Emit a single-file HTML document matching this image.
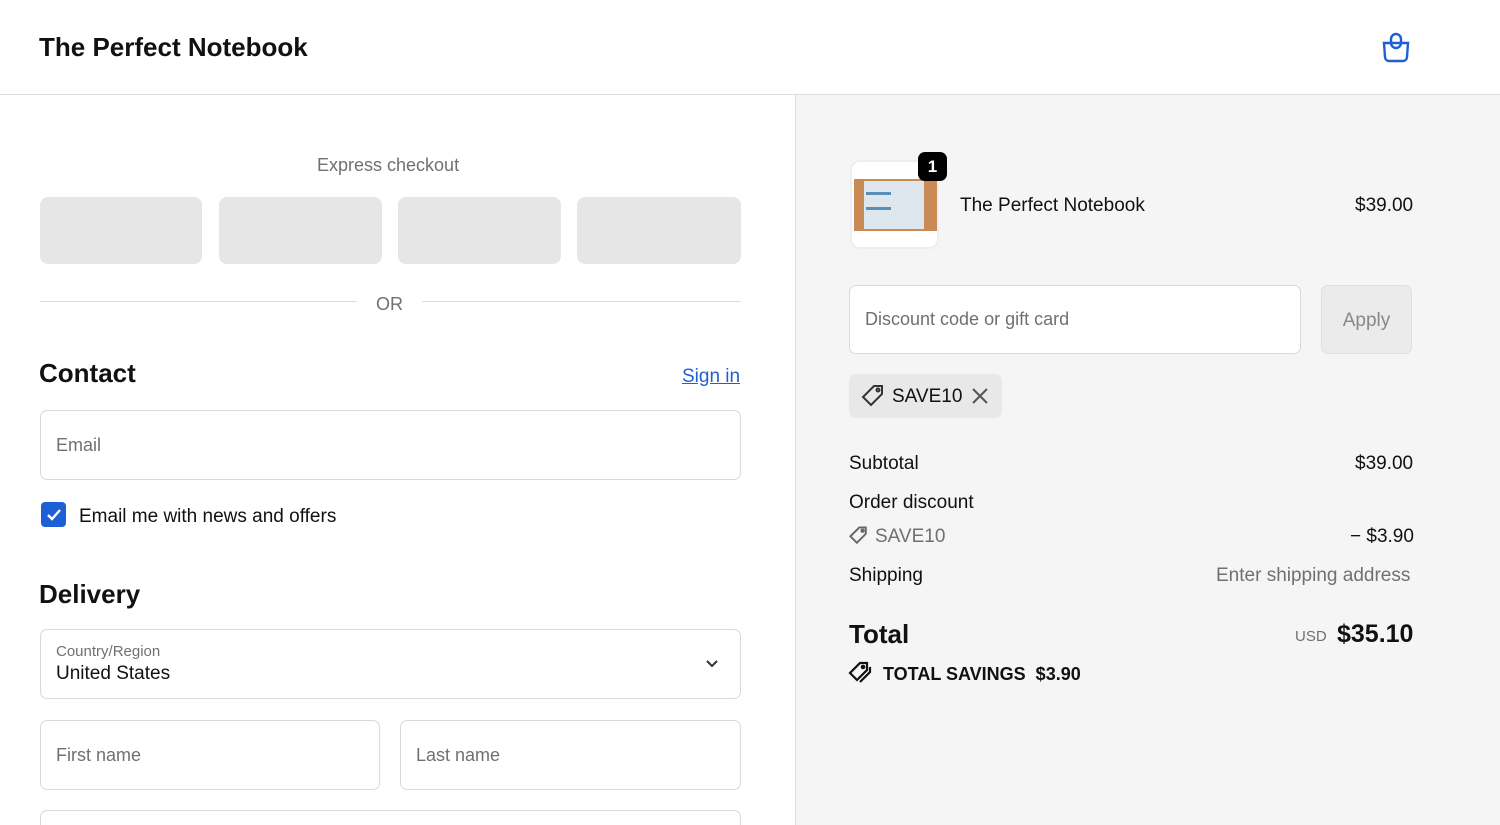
<!DOCTYPE html>
<html style="overflow:hidden;width:1500px;height:825px"><head><meta charset="utf-8"><style>
*{box-sizing:border-box;margin:0;padding:0}
body{width:1500px;height:825px;overflow:hidden;font-family:"Liberation Sans",sans-serif;color:#000;background:#fff;position:relative}
.abs{position:absolute}
.hdr{left:0;top:0;width:1500px;height:95px;border-bottom:1px solid #ddd;background:#fff}
.right{left:795px;top:95px;width:705px;height:730px;background:#f5f5f5;border-left:1px solid #ddd}
.inp{position:absolute;border:1px solid #d9d9d9;border-radius:7px;background:#fff;font-size:18px;color:#707070;padding-left:15px;display:flex;align-items:center}
.exp{position:absolute;top:197px;height:67px;background:#e6e6e6;border-radius:8px}
.t{position:absolute;white-space:nowrap}
</style></head><body>
<div class="abs hdr"></div>
<div class="t" style="left:39px;top:32px;font-size:26px;font-weight:bold;color:#111">The Perfect Notebook</div>
<svg class="abs" style="left:1381px;top:31px" width="30" height="32" viewBox="0 0 30 32" fill="none" stroke="#1f5fd6" stroke-width="2.4"><path d="M3 12h24l-1 14a4 4 0 0 1-4 4H8a4 4 0 0 1-4-4z"/><rect x="10" y="3" width="10" height="14" rx="5"/></svg>
<div class="abs right"></div>

<div class="t" style="left:317px;top:155px;font-size:18px;color:#707070">Express checkout</div>
<div class="exp" style="left:40px;width:162px"></div>
<div class="exp" style="left:219px;width:163px"></div>
<div class="exp" style="left:398px;width:163px"></div>
<div class="exp" style="left:577px;width:164px"></div>
<div class="abs" style="left:40px;top:301px;width:317px;border-top:1px solid #ddd"></div>
<div class="abs" style="left:422px;top:301px;width:319px;border-top:1px solid #ddd"></div>
<div class="t" style="left:376px;top:294px;font-size:18px;color:#707070">OR</div>
<div class="t" style="left:39px;top:358px;font-size:26px;font-weight:bold;color:#111">Contact</div>
<div class="t" style="left:682px;top:366px;font-size:19px;color:#1f5fd6;text-decoration:underline">Sign in</div>
<div class="inp" style="left:40px;top:410px;width:701px;height:70px">Email</div>
<div class="abs" style="left:41px;top:502px;width:25px;height:25px;background:#1f5fd6;border-radius:4px"></div>
<svg class="abs" style="left:41px;top:502px" width="25" height="25"><path d="M7 13l4 4 8-9" stroke="#fff" stroke-width="2.4" fill="none"/></svg>
<div class="t" style="left:79px;top:506px;font-size:19px;color:#111">Email me with news and offers</div>
<div class="t" style="left:39px;top:579px;font-size:26px;font-weight:bold;color:#111">Delivery</div>
<div class="inp" style="left:40px;top:629px;width:701px;height:70px;display:block;padding-top:13px"><div style="font-size:15px;color:#707070">Country/Region</div><div style="font-size:19px;color:#111;margin-top:3px">United States</div></div>
<svg class="abs" style="left:704px;top:658px" width="16" height="12"><path d="M3 3l5 5 5-5" stroke="#333" stroke-width="2" fill="none"/></svg>
<div class="inp" style="left:40px;top:720px;width:340px;height:70px">First name</div>
<div class="inp" style="left:400px;top:720px;width:341px;height:70px">Last name</div>
<div class="inp" style="left:40px;top:810px;width:701px;height:15px;border-bottom:none;border-radius:7px 7px 0 0"></div>

<div class="abs" style="left:850px;top:160px;width:89px;height:89px;background:#fff;border:2px solid #eee;border-radius:10px;overflow:hidden">
<div style="position:absolute;left:2px;top:17px;width:83px;height:52px;background:#c98a55"></div>
<div style="position:absolute;left:12px;top:19px;width:60px;height:48px;background:#dfe7ee"></div>
<div style="position:absolute;left:14px;top:30px;width:25px;height:3px;background:#5a8fb8"></div>
<div style="position:absolute;left:14px;top:45px;width:25px;height:3px;background:#5a8fb8"></div>
</div>
<div class="abs" style="left:918px;top:152px;width:29px;height:29px;background:#000;border-radius:7px;color:#fff;font-size:17px;font-weight:bold;text-align:center;line-height:29px">1</div>
<div class="t" style="left:960px;top:195px;font-size:19px;color:#111">The Perfect Notebook</div>
<div class="t" style="left:1355px;top:195px;font-size:19px;color:#111">$39.00</div>
<div class="inp" style="left:849px;top:285px;width:452px;height:69px">Discount code or gift card</div>
<div class="abs" style="left:1321px;top:285px;width:91px;height:69px;background:#ebebeb;border:1px solid #e0e0e0;border-radius:7px;color:#888;font-size:19px;text-align:center;line-height:69px">Apply</div>
<div class="abs" style="left:849px;top:374px;width:153px;height:44px;background:#e8e8e8;border-radius:7px"></div>
<svg class="abs" style="left:860px;top:383px" width="26" height="26" viewBox="0 0 26 26" fill="none" stroke="#333" stroke-width="2"><path d="M14 3h8v8L11 22 3 14z"/><circle cx="18" cy="7" r="1.5"/></svg>
<div class="t" style="left:892px;top:386px;font-size:19px;color:#111">SAVE10</div>
<svg class="abs" style="left:971px;top:387px" width="18" height="18"><path d="M2 2l14 14M16 2L2 16" stroke="#555" stroke-width="2"/></svg>
<div class="t" style="left:849px;top:453px;font-size:19px;color:#111">Subtotal</div>
<div class="t" style="left:1355px;top:453px;font-size:19px;color:#111">$39.00</div>
<div class="t" style="left:849px;top:492px;font-size:19px;color:#111">Order discount</div>
<svg class="abs" style="left:848px;top:525px" width="21" height="21" viewBox="0 0 26 26" fill="none" stroke="#666" stroke-width="2.4"><path d="M14 3h8v8L11 22 3 14z"/><circle cx="18" cy="7" r="1.5"/></svg>
<div class="t" style="left:875px;top:526px;font-size:19px;color:#707070">SAVE10</div>
<div class="t" style="left:1350px;top:526px;font-size:19px;color:#111">− $3.90</div>
<div class="t" style="left:849px;top:565px;font-size:19px;color:#111">Shipping</div>
<div class="t" style="left:1216px;top:565px;font-size:19px;color:#707070">Enter shipping address</div>
<div class="t" style="left:849px;top:619px;font-size:26px;font-weight:bold;color:#111">Total</div>
<div class="t" style="left:1295px;top:628px;font-size:15px;color:#707070">USD</div>
<div class="t" style="left:1337px;top:620px;font-size:25px;font-weight:bold;color:#111">$35.10</div>
<svg class="abs" style="left:848px;top:661px" width="26" height="24" viewBox="0 0 26 24" fill="none" stroke="#111" stroke-width="2.2"><path d="M12 2h7v7L9 19 2 12z"/><path d="M22 6v5L12 21"/><circle cx="15" cy="6" r="1.2"/></svg>
<div class="t" style="left:883px;top:664px;font-size:18px;font-weight:bold;color:#111">TOTAL SAVINGS&nbsp; $3.90</div>
</body></html>
